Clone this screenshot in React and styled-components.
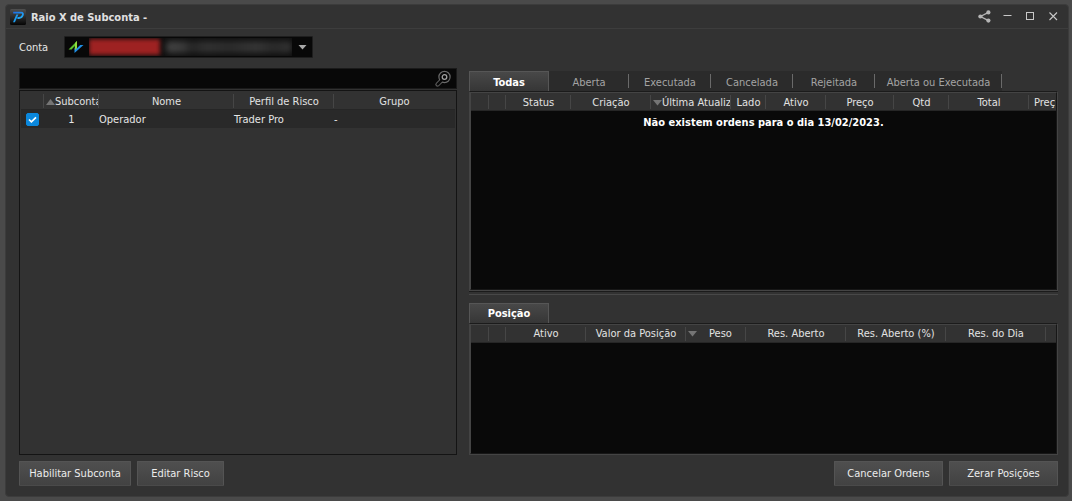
import React, { useState } from "react";
import styled, { createGlobalStyle, css } from "styled-components";

const GlobalStyle = createGlobalStyle`
  *, *::before, *::after { box-sizing: border-box; }
  body {
    margin: 0;
    background: #4a4a4a;
    color: #e6e6e6;
    font: 11px/14px "DejaVu Sans Condensed", "DejaVu Sans", Tahoma, sans-serif;
  }
  button, input, select { font: inherit; color: inherit; }
`;

const Desktop = styled.div`
  display: flex;
  min-height: 100vh;
  padding: 4px 3px 4px 5px;
`;

const Window = styled.main`
  flex: 1;
  min-width: 0;
  display: flex;
  flex-direction: column;
  background: #323232;
  border: 1px solid #3c3c3c;
  border-radius: 4px;
`;

const TitleBar = styled.header`
  display: flex;
  align-items: center;
  gap: 5px;
  height: 24px;
  padding: 0 7px 0 4px;
  border-bottom: 1px solid #3d3d3d;
`;

const Title = styled.h1`
  flex: 1;
  margin: 0;
  padding-top: 2px;
  font-size: 11px;
  line-height: 14px;
  font-weight: bold;
  color: #e0e0e0;
`;

const WindowActions = styled.div`
  display: flex;
  gap: 8px;
`;

const WindowButton = styled.button`
  display: grid;
  place-items: center;
  width: 15px;
  height: 16px;
  padding: 0;
  border: 0;
  background: none;
  color: #c8c8c8;
`;

const ShareButton = styled(WindowButton)`
  color: #b4b4b4;
`;

const Body = styled.div`
  flex: 1;
  display: flex;
  flex-direction: column;
  padding: 7px 10px 10px 13px;
`;

const AccountRow = styled.div`
  display: flex;
  align-items: center;
  gap: 16px;
  height: 22px;
  margin-bottom: 10px;
`;

const AccountLabel = styled.label`
  padding-top: 1px;
`;

const SelectBox = styled.div`
  position: relative;
  width: 249px;
  height: 22px;
  background: #080808;
  border: 1px solid #1e1e1e;
  border-radius: 1px;
`;

const Select = styled.select`
  width: 100%;
  height: 100%;
  padding: 0 20px 0 24px;
  border: 0;
  background: transparent;
  appearance: none;
`;

const SelectDecor = styled.span`
  position: absolute;
  inset: 1px;
  display: flex;
  align-items: center;
  padding: 0 4px 0 2px;
  pointer-events: none;
`;

const Redaction = styled.span`
  flex: 1;
  display: flex;
  align-items: center;
  gap: 6px;
  height: 18px;
  margin: 0 6px 0 5px;
  overflow: hidden;
  background: #0f0f0f;
`;

const RedBlur = styled.span`
  width: 71px;
  height: 16px;
  background: #9e2222;
  filter: blur(2px);
`;

const GreyBlur = styled.span`
  flex: 1;
  height: 12px;
  border-radius: 4px;
  background: linear-gradient(90deg, #444, #3a3a3a 14%, #262626 20%, #323232 32%, #2c2c2c 50%, #363636 72%, #2a2a2a 86%, #343434);
  filter: blur(3px);
`;

const Columns = styled.div`
  flex: 1;
  display: grid;
  grid-template-columns: minmax(0, 438fr) minmax(0, 589fr);
  column-gap: 12px;
`;

const Column = styled.section`
  display: flex;
  flex-direction: column;
  min-width: 0;
`;

const OrdersColumn = styled(Column)`
  padding-top: 3px;
`;

const SearchBox = styled.label`
  display: flex;
  align-items: center;
  height: 21px;
  padding: 0 4px 0 5px;
  background: #080808;
  border: 1px solid #1a1a1a;
`;

const SearchInput = styled.input`
  flex: 1;
  min-width: 0;
  padding: 0;
  border: 0;
  outline: 0;
  background: transparent;
`;

const AccountList = styled.div`
  flex: 1;
  margin-top: 1px;
  padding: 1px 1px 0;
  border: 1px solid #141414;
`;

const Grid = styled.table`
  width: 100%;
  table-layout: fixed;
  border-collapse: separate;
  border-spacing: 0;
`;

const Col = styled.col`
  width: ${(p) => (p.$width ? `${p.$width}px` : "auto")};
`;

const HeadCell = styled.th`
  height: 18px;
  padding: 2px 0 0;
  overflow: hidden;
  white-space: nowrap;
  font-weight: normal;
  text-align: ${(p) => p.$align || "center"};
  color: #e2e2e2;
  border-bottom: 1px solid #262626;
  background: #323232;
  ${(p) =>
    !p.$last &&
    css`
      background: linear-gradient(#464646, #464646) right 2px / 1px 14px no-repeat #323232;
    `}
`;

const SortCaption = styled.span`
  display: flex;
  align-items: center;
  margin-right: 1px;
  padding-left: 2px;
  gap: ${(p) => (p.$wide ? "12px" : "0")};
  overflow: hidden;
`;

const SortArrow = styled.svg`
  flex: none;
  width: 9px;
  height: 6px;
  fill: #757575;
`;

const ClippedCaption = styled.span`
  display: block;
  padding-left: 5px;
  margin-right: 1px;
  overflow: hidden;
`;

const Cell = styled.td`
  height: 18px;
  padding: 1px 0 0;
  text-align: ${(p) => p.$align || "left"};
  background: #292929;
`;

const CheckBox = styled.input`
  appearance: none;
  display: block;
  width: 13px;
  height: 13px;
  margin: 0 auto 0 5px;
  border-radius: 2px;
  border: 1px solid #0b88dd;
  background: #1a1a1a;
  &:checked {
    background: #0b88dd url("data:image/svg+xml,%3Csvg xmlns='http://www.w3.org/2000/svg' viewBox='0 0 11 11'%3E%3Cpath d='M2 5.5l2.4 2.4L9 3.4' fill='none' stroke='white' stroke-width='1.7'/%3E%3C/svg%3E") center / 11px 11px;
  }
`;

const TabStrip = styled.div`
  display: flex;
  height: 20px;
`;

const Tab = styled.button`
  width: ${(p) => p.$width}px;
  padding: 3px 0 0;
  border: 0;
  white-space: nowrap;
  ${(p) =>
    p.$active
      ? css`
          font-weight: bold;
          color: #fff;
          background: linear-gradient(#484848, #363636);
          border: 1px solid #565656;
          border-bottom: 0;
          padding: 2px 0 0;
        `
      : css`
          color: #a4a4a4;
          background: linear-gradient(#6a6a6a, #6a6a6a) right 3px / 1px 14px no-repeat #2b2b2b;
        `}
`;

const Frame = styled.div`
  flex: ${(p) => p.$grow} 1 0;
  display: flex;
  border: 1px solid #444;
  border-top-color: #1b1b1b;
`;

const FrameInner = styled.div`
  flex: 1;
  min-width: 0;
  overflow: hidden;
  background: #090909;
  border-top: 1px solid #444;
  border-right: 1px solid #171717;
  border-bottom: 1px solid #171717;
  border-left: 1px solid #444;
`;

const EmptyMessage = styled.p`
  margin: 5px 0 0;
  text-align: center;
  font-weight: bold;
  color: #fff;
`;

const Splitter = styled.div`
  height: 4px;
  margin-bottom: 8px;
  border-top: 1px solid #1b1b1b;
  border-bottom: 1px solid #484848;
`;

const ActionBar = styled.footer`
  display: flex;
  gap: 6px;
  padding-top: 6px;
`;

const ActionSpacer = styled.span`
  flex: 1;
`;

const ActionButton = styled.button`
  height: 25px;
  width: ${(p) => p.$width}px;
  padding: 0;
  color: #ececec;
  background: linear-gradient(#4f4f4f, #424242);
  border: 1px solid #545454;
  border-bottom-color: #4a4a4a;
  border-radius: 1px;
`;

const orderTabs = [
  ["Todas", 80],
  ["Aberta", 80],
  ["Executada", 82],
  ["Cancelada", 82],
  ["Rejeitada", 82],
  ["Aberta ou Executada", 127],
];

function Arrow({ up }) {
  return (
    <SortArrow viewBox="0 0 9 6" aria-hidden="true">
      <path d={up ? "M0 6L4.5 0L9 6z" : "M0 0h9L4.5 5.5z"} />
    </SortArrow>
  );
}

function AppLogo() {
  return (
    <svg width="16" height="16" viewBox="0 0 16 16" aria-hidden="true">
      <defs>
        <linearGradient id="logoBack" x1="0" y1="0" x2="0" y2="1">
          <stop offset="0" stopColor="#505050" />
          <stop offset="0.7" stopColor="#1c1c1c" />
          <stop offset="1" stopColor="#050505" />
        </linearGradient>
        <linearGradient id="logoBlue" x1="0" y1="0" x2="1" y2="1">
          <stop offset="0" stopColor="#1d6fe8" />
          <stop offset="1" stopColor="#22b2f4" />
        </linearGradient>
      </defs>
      <rect width="16" height="16" rx="1.5" fill="url(#logoBack)" />
      <path d="M3.2 3.6H11.2C12.9 3.6 13.3 4.8 12.7 6.3C12 8.2 10.8 9 9 9H7.4" fill="none" stroke="url(#logoBlue)" strokeWidth="1.8" />
      <path d="M8.4 5.4L4.9 13.2H3L5.6 7.2L6.3 5.4z" fill="#1c9bee" />
    </svg>
  );
}

function BrokerIcon() {
  return (
    <svg width="16" height="14" viewBox="0 0 16 14" aria-hidden="true">
      <path d="M0.5 9.5L9 1V8L6.8 10.2V6L3.6 9.5z" fill="#5cc22c" />
      <path d="M6.5 13V8.5L8.7 6.3V8.5L12.2 5H15.5z" fill="#1f8fe6" />
      <path d="M7 3L9 1V8L7 10z" fill="#8fdc3c" />
    </svg>
  );
}

function OrdersTable() {
  return (
    <Grid>
      <colgroup>
        {[18, 17, 65, 80, 80, 35, 60, 68, 55, 80, 0].map((w, i) => (
          <Col key={i} $width={w} />
        ))}
      </colgroup>
      <thead>
        <tr>
          <HeadCell />
          <HeadCell />
          <HeadCell>Status</HeadCell>
          <HeadCell>Criação</HeadCell>
          <HeadCell $align="left">
            <SortCaption>
              <Arrow />
              Última Atualização
            </SortCaption>
          </HeadCell>
          <HeadCell>Lado</HeadCell>
          <HeadCell>Ativo</HeadCell>
          <HeadCell>Preço</HeadCell>
          <HeadCell>Qtd</HeadCell>
          <HeadCell>Total</HeadCell>
          <HeadCell $align="left" $last>
            <ClippedCaption>Preço</ClippedCaption>
          </HeadCell>
        </tr>
      </thead>
    </Grid>
  );
}

function PositionTable() {
  return (
    <Grid>
      <colgroup>
        {[18, 17, 80, 100, 60, 100, 100, 100, 0].map((w, i) => (
          <Col key={i} $width={w} />
        ))}
      </colgroup>
      <thead>
        <tr>
          <HeadCell />
          <HeadCell />
          <HeadCell>Ativo</HeadCell>
          <HeadCell>Valor da Posição</HeadCell>
          <HeadCell $align="left">
            <SortCaption $wide>
              <Arrow />
              Peso
            </SortCaption>
          </HeadCell>
          <HeadCell>Res. Aberto</HeadCell>
          <HeadCell>Res. Aberto (%)</HeadCell>
          <HeadCell>Res. do Dia</HeadCell>
          <HeadCell $last />
        </tr>
      </thead>
    </Grid>
  );
}

export default function App() {
  const [tab, setTab] = useState("Todas");
  const [checked, setChecked] = useState(true);

  return (
    <>
      <GlobalStyle />
      <Desktop>
        <Window>
          <TitleBar>
            <AppLogo />
            <Title>Raio X de Subconta -</Title>
            <WindowActions>
              <ShareButton aria-label="Compartilhar">
                <svg width="13" height="13" viewBox="0 0 13 13" fill="currentColor">
                  <path d="M10.5 2.4L2.5 6.5L10.5 10.6" fill="none" stroke="currentColor" strokeWidth="1.3" />
                  <circle cx="10.4" cy="2.4" r="2.1" />
                  <circle cx="2.4" cy="6.5" r="2.1" />
                  <circle cx="10.4" cy="10.6" r="2.1" />
                </svg>
              </ShareButton>
              <WindowButton aria-label="Minimizar">
                <svg width="9" height="9" viewBox="0 0 9 9">
                  <path d="M0.5 3.5H8.5" stroke="currentColor" />
                </svg>
              </WindowButton>
              <WindowButton aria-label="Maximizar">
                <svg width="9" height="9" viewBox="0 0 9 9">
                  <rect x="0.5" y="0.5" width="7" height="7" fill="none" stroke="currentColor" />
                </svg>
              </WindowButton>
              <WindowButton aria-label="Fechar">
                <svg width="9" height="9" viewBox="0 0 9 9">
                  <path d="M0.5 0.5L8 8M8 0.5L0.5 8" stroke="currentColor" strokeWidth="1.1" />
                </svg>
              </WindowButton>
            </WindowActions>
          </TitleBar>

          <Body>
            <AccountRow>
              <AccountLabel htmlFor="account">Conta</AccountLabel>
              <SelectBox>
                <Select id="account" defaultValue="">
                  <option value="" />
                </Select>
                <SelectDecor aria-hidden="true">
                  <BrokerIcon />
                  <Redaction>
                    <RedBlur />
                    <GreyBlur />
                  </Redaction>
                  <svg width="9" height="5" viewBox="0 0 9 5">
                    <path d="M0.5 0h8L4.5 4.5z" fill="#a8a8a8" />
                  </svg>
                </SelectDecor>
              </SelectBox>
            </AccountRow>

            <Columns>
              <Column>
                <SearchBox>
                  <SearchInput type="text" aria-label="Pesquisar" />
                  <svg width="18" height="18" viewBox="0 0 18 18" fill="none" aria-hidden="true">
                    <path d="M7.6 10.4L3.5 14.5" stroke="#5c5c5c" strokeWidth="4.4" strokeLinecap="round" />
                    <circle cx="10.5" cy="7" r="4.6" stroke="#6a6a6a" strokeWidth="3.2" />
                    <path d="M7.6 10.4L3.7 14.3" stroke="#080808" strokeWidth="2.4" strokeLinecap="round" />
                    <circle cx="10.5" cy="7" r="4.3" fill="#080808" stroke="#080808" strokeWidth="1.4" />
                    <circle cx="10.5" cy="7" r="2.3" stroke="#a0a0a0" strokeWidth="1.3" />
                  </svg>
                </SearchBox>
                <AccountList>
                  <Grid>
                    <colgroup>
                      {[23, 55, 135, 100, 0].map((w, i) => (
                        <Col key={i} $width={w} />
                      ))}
                    </colgroup>
                    <thead>
                      <tr>
                        <HeadCell />
                        <HeadCell $align="left">
                          <SortCaption>
                            <Arrow up />
                            Subconta
                          </SortCaption>
                        </HeadCell>
                        <HeadCell>Nome</HeadCell>
                        <HeadCell>Perfil de Risco</HeadCell>
                        <HeadCell $last>Grupo</HeadCell>
                      </tr>
                    </thead>
                    <tbody>
                      <tr>
                        <Cell>
                          <CheckBox
                            type="checkbox"
                            aria-label="Selecionar Operador"
                            checked={checked}
                            onChange={(e) => setChecked(e.target.checked)}
                          />
                        </Cell>
                        <Cell $align="center">1</Cell>
                        <Cell>Operador</Cell>
                        <Cell>Trader Pro</Cell>
                        <Cell>-</Cell>
                      </tr>
                    </tbody>
                  </Grid>
                </AccountList>
              </Column>

              <OrdersColumn>
                <TabStrip role="tablist">
                  {orderTabs.map(([name, width]) => (
                    <Tab
                      key={name}
                      role="tab"
                      aria-selected={tab === name}
                      $active={tab === name}
                      $width={width}
                      onClick={() => setTab(name)}
                    >
                      {name}
                    </Tab>
                  ))}
                </TabStrip>
                <Frame $grow={200}>
                  <FrameInner>
                    <OrdersTable />
                    <EmptyMessage>Não existem ordens para o dia 13/02/2023.</EmptyMessage>
                  </FrameInner>
                </Frame>
                <Splitter />
                <TabStrip role="tablist">
                  <Tab role="tab" aria-selected="true" $active $width={80}>
                    Posição
                  </Tab>
                </TabStrip>
                <Frame $grow={132}>
                  <FrameInner>
                    <PositionTable />
                  </FrameInner>
                </Frame>
              </OrdersColumn>
            </Columns>

            <ActionBar>
              <ActionButton $width={112}>Habilitar Subconta</ActionButton>
              <ActionButton $width={87}>Editar Risco</ActionButton>
              <ActionSpacer />
              <ActionButton $width={109}>Cancelar Ordens</ActionButton>
              <ActionButton $width={109}>Zerar Posições</ActionButton>
            </ActionBar>
          </Body>
        </Window>
      </Desktop>
    </>
  );
}
